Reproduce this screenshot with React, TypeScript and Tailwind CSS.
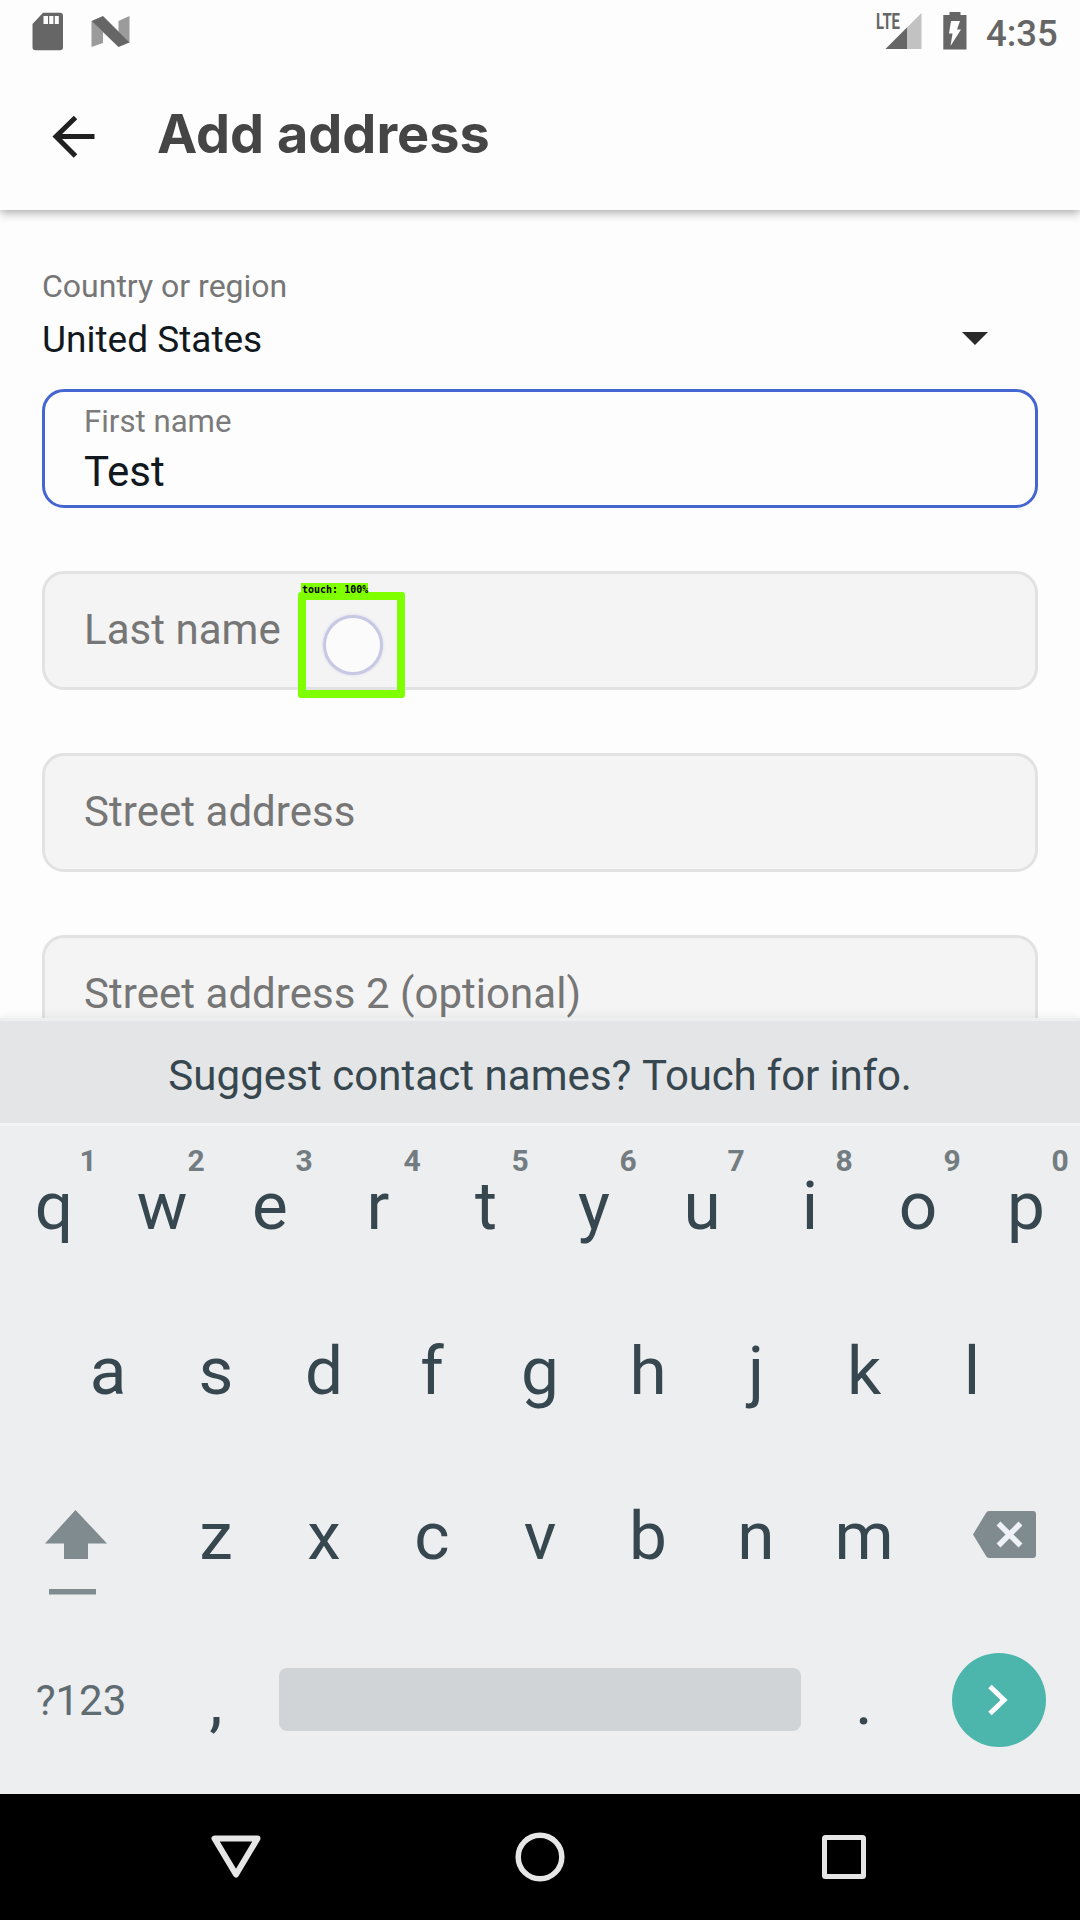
import React from "react";

const row1 = "qwertyuiop".split("");
const row2 = "asdfghjkl".split("");
const row3 = "zxcvbnm".split("");

function StatusBar() {
  return (
    <div className="flex h-[72px] shrink-0 items-start text-[#666]">
      <svg className="ml-8 mt-3 h-10 w-8" viewBox="0 0 32 40">
        <path d="M11 .7H28Q31 .7 31 3.7V35Q31 38.300 28 38.300H3.500Q.5 38.300 .5 35V12Z" fill="#666" />
        <path d="M11.500 4h4.500v8h-4.500zM17.200 4h4.200v8h-4.200zM22.800 4h4v8h-4z" fill="#fdfdfd" />
      </svg>
      <svg className="ml-[27px] mt-4 h-8 w-10" viewBox="0 0 40 32">
        <path d="M.5 5L12 16V27L.5 31ZM27.500 5L38.500 0V27L27.500 16Z" fill="#9b9b9b" />
        <path d="M.5 5L12 0L38.500 26.500L27.500 31Z" fill="#666" />
      </svg>
      <svg className="ml-[744px] mt-2 h-11 w-[50px]" viewBox="0 0 50 44">
        <path d="M10.500 41L46.500 5V41Z" fill="#c2c2c2" />
        <path d="M10.500 41L32 19.500V41Z" fill="#666" />
        <text x="1" y="21" fontFamily="Roboto" fontWeight="700" fontSize="21.500" textLength="24" lengthAdjust="spacingAndGlyphs" fill="#666">LTE</text>
      </svg>
      <svg className="ml-[18px] mt-3 h-[38px] w-6" viewBox="0 0 24 38">
        <path d="M6.500 0H17.500V3H23.500V37.500H.3V3H6.500Z" fill="#666" />
        <path d="M8 9H17L14 17.500H18L7.500 34L9.500 21.500H6Z" fill="#fdfdfd" />
      </svg>
      <span className="ml-[19px] text-[36.500px] leading-[67px] font-medium">4:35</span>
    </div>
  );
}

function Field({ label }: { label: string }) {
  return (
    <div className="mb-[63px] flex h-[119px] shrink-0 items-center rounded-[22px] border-[3px] border-[#e2e2e2] bg-[#f4f4f4] pb-0.5 pl-[39px] text-[42px] tracking-[0.04px] text-[#767676]">
      {label}
    </div>
  );
}

function Key({ char, hint }: { char: string; hint?: string }) {
  return (
    <div className="relative w-[108px] text-center">
      {char}
      {hint && (
        <span className="absolute left-[68px] top-[-25px] w-10 text-[30px] leading-10 font-bold text-[#737c80]">{hint}</span>
      )}
    </div>
  );
}

export default function App() {
  return (
    <div className="flex h-[1920px] w-[1080px] flex-col overflow-hidden bg-[#fdfdfd] font-['Roboto',sans-serif]">
      <div className="relative z-10 h-[210px] shrink-0 bg-[#fdfdfd] shadow-[0_3px_9px_rgba(0,0,0,0.32)]">
        <StatusBar />
        <div className="flex">
          <svg className="ml-[52px] mt-[43px] h-11 w-11" viewBox="0 0 44 44">
            <path d="M23.500 2.500L4 21.500L23.500 41M4 21.500H42.500" fill="none" stroke="#202020" strokeWidth="5" />
          </svg>
          <h1 className="ml-[61px] mt-[32px] text-[54px] leading-[60px] font-bold whitespace-nowrap text-[#454545] font-['Inter',sans-serif]">Add address</h1>
        </div>
      </div>

      <main className="flex h-[808px] shrink-0 flex-col overflow-hidden px-[42px] pt-[56px]">
        <div className="h-10 text-[32px] leading-10 text-[#767676]">Country or region</div>
        <div className="mt-[12px] flex h-11 items-center justify-between text-[37px] leading-11 text-[#111820]">
          <span>United States</span>
          <svg className="mr-[50px] mb-[3px] h-[13px] w-[26px]" viewBox="0 0 26 13"><path d="M0 0H26L13 13Z" fill="#2a2a2a" /></svg>
        </div>
        <div className="mt-[27px] mb-[63px] h-[119px] shrink-0 rounded-[22px] border-[3px] border-[#4565d0] pl-[39px] pt-2.5">
          <div className="text-[31.200px] leading-10 text-[#7b7b7b]">First name</div>
          <div className="mt-[5px] text-[42px] leading-[50px] text-[#111820]">Test</div>
        </div>
        <div className="relative">
          <Field label="Last name" />
          <div className="absolute left-[256px] top-[21px] h-[106px] w-[107px] rounded-[3px] border-8 border-[#80ff00]">
            <div className="absolute left-[-5px] top-[-17px] h-[13px] w-[67px] bg-[#80ff00] pl-px text-[10px] leading-[13px] font-bold whitespace-pre text-black font-['DejaVu_Sans_Mono',monospace]">touch: 100%</div>
            <div className="absolute left-[17px] top-[15px] h-[60px] w-[60px] rounded-full border-[3px] border-[#c6c8e4] bg-[#fbfbfc] shadow-[0_0_3px_#d4d5ea]" />
          </div>
        </div>
        <Field label="Street address" />
        <Field label="Street address 2 (optional)" />
      </main>

      <section className="relative flex h-[776px] shrink-0 flex-col bg-[#eceef0] text-[#37474f] shadow-[0_-2px_8px_rgba(0,0,0,0.06)]">
        <div className="h-[108px] border-y-[3px] border-t-[#eeefef] border-b-[#f2f3f4] bg-[#e3e5e6] text-center text-[42px] leading-[109px]">
          <span className="tracking-[0.060px]">Suggest contact names? </span>
          <span className="tracking-[-0.150px]">Touch for info.</span>
        </div>
        <div className="flex h-[165px] pt-[40px] text-[67.500px] leading-[80px]">
          {row1.map((c, i) => <Key key={c} char={c} hint={String((i + 1) % 10)} />)}
        </div>
        <div className="flex h-[165px] justify-center pt-[40px] text-[67.500px] leading-[80px]">
          {row2.map((c) => <Key key={c} char={c} />)}
        </div>
        <div className="flex h-[165px] pt-[40px] text-[67.500px] leading-[80px]">
          <svg className="mt-[10px] h-24 w-[162px]" viewBox="0 0 162 96" fill="#808b8f">
            <path d="M75.500 4L107 37.500H88V53H64V37.500H45Z" />
            <path d="M49 83h47v5.500H49z" />
          </svg>
          {row3.map((c) => <Key key={c} char={c} />)}
          <svg className="mt-[10px] h-24 w-[162px]" viewBox="0 0 162 96">
            <path d="M71 5H115Q118 5 118 8V49Q118 52 115 52H71Q69 52 68 50L55 28.500L68 7Q69 5 71 5Z" fill="#808b8f" />
            <path d="M80.500 17.500L102.500 39.500M102.500 17.500L80.500 39.500" stroke="#eef2f6" strokeWidth="5.500" />
          </svg>
        </div>
        <div className="flex h-[173px] pt-[47px]">
          <div className="w-[162px] pt-2 text-center text-[42px] leading-[50px] text-[#5f6c72]">?123</div>
          <div className="-mt-[7px] w-[108px] text-center text-[67.500px] leading-[80px]">,</div>
          <div className="mx-[9px] h-[63px] w-[522px] rounded-lg bg-[#d0d4d7]" />
          <div className="-mt-[7px] w-[108px] text-center text-[67.500px] leading-[80px]">.</div>
          <div className="-mt-[15px] ml-[34px] flex h-[94px] w-[94px] items-center justify-center rounded-full bg-[#4db6ac]">
            <svg className="h-8 w-6" viewBox="0 0 24 32"><path d="M3 2.500L17 16L3 29.500" fill="none" stroke="#fff" strokeWidth="5" /></svg>
          </div>
        </div>
      </section>

      <nav className="flex h-[126px] shrink-0 items-center justify-between bg-black px-[210px]">
        <svg className="h-[52px] w-[52px]" viewBox="0 0 52 52"><path d="M4.500 7.500H47.500L26 43.500Z" fill="none" stroke="#e6e6e6" strokeWidth="6" strokeLinejoin="round" /></svg>
        <svg className="h-[52px] w-[52px]" viewBox="0 0 52 52"><circle cx="26" cy="26" r="21.800" fill="none" stroke="#e6e6e6" strokeWidth="5.500" /></svg>
        <svg className="h-[52px] w-[52px]" viewBox="0 0 52 52"><rect x="6.500" y="6.500" width="39" height="39" rx="1" fill="none" stroke="#e6e6e6" strokeWidth="5" /></svg>
      </nav>
    </div>
  );
}
